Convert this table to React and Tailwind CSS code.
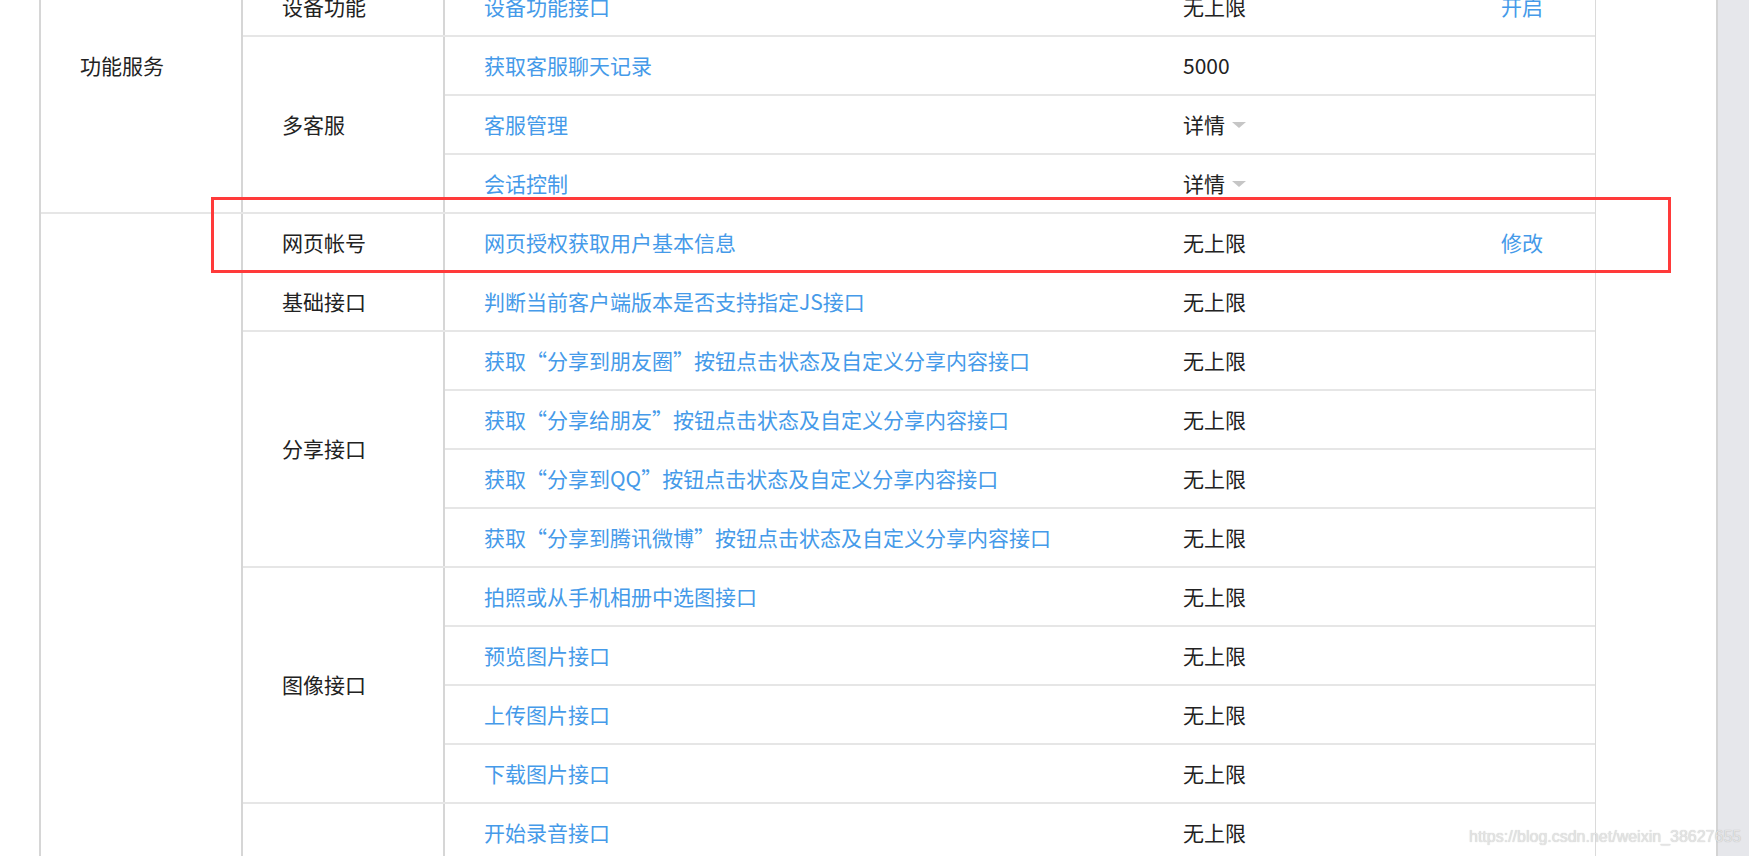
import React from "react";

const groups = [
  {
    name: "功能服务",
    subs: [
      { name: "卡券功能", rows: [{ api: "卡券接口", quota: "无上限" }] },
      { name: "设备功能", rows: [{ api: "设备功能接口", quota: "无上限", action: "开启" }] },
      {
        name: "多客服",
        rows: [
          { api: "获取客服聊天记录", quota: "5000" },
          { api: "客服管理", quota: "详情", dropdown: true },
          { api: "会话控制", quota: "详情", dropdown: true },
        ],
      },
    ],
  },
  {
    name: "网页服务",
    subs: [
      { name: "网页帐号", rows: [{ api: "网页授权获取用户基本信息", quota: "无上限", action: "修改" }] },
      { name: "基础接口", rows: [{ api: "判断当前客户端版本是否支持指定JS接口", quota: "无上限" }] },
      {
        name: "分享接口",
        rows: [
          { api: "获取“分享到朋友圈”按钮点击状态及自定义分享内容接口", quota: "无上限" },
          { api: "获取“分享给朋友”按钮点击状态及自定义分享内容接口", quota: "无上限" },
          { api: "获取“分享到QQ”按钮点击状态及自定义分享内容接口", quota: "无上限" },
          { api: "获取“分享到腾讯微博”按钮点击状态及自定义分享内容接口", quota: "无上限" },
        ],
      },
      {
        name: "图像接口",
        rows: [
          { api: "拍照或从手机相册中选图接口", quota: "无上限" },
          { api: "预览图片接口", quota: "无上限" },
          { api: "上传图片接口", quota: "无上限" },
          { api: "下载图片接口", quota: "无上限" },
        ],
      },
      {
        name: "音频接口",
        rows: [
          { api: "开始录音接口", quota: "无上限" },
          { api: "停止录音接口", quota: "无上限" },
          { api: "监听录音自动停止接口", quota: "无上限" },
          { api: "播放语音接口", quota: "无上限" },
          { api: "暂停播放接口", quota: "无上限" },
          { api: "停止播放接口", quota: "无上限" },
          { api: "监听语音播放完毕接口", quota: "无上限" },
          { api: "上传语音接口", quota: "无上限" },
          { api: "下载语音接口", quota: "无上限" },
        ],
      },
      { name: "智能接口", rows: [{ api: "识别音频并返回识别结果接口", quota: "无上限" }] },
      { name: "设备信息", rows: [{ api: "获取网络状态接口", quota: "无上限" }] },
      {
        name: "地理位置",
        rows: [
          { api: "使用微信内置地图查看位置接口", quota: "无上限" },
          { api: "获取地理位置接口", quota: "无上限" },
        ],
      },
      {
        name: "界面操作",
        rows: [
          { api: "隐藏右上角菜单接口", quota: "无上限" },
          { api: "显示右上角菜单接口", quota: "无上限" },
          { api: "关闭当前网页窗口接口", quota: "无上限" },
          { api: "批量隐藏功能按钮接口", quota: "无上限" },
          { api: "批量显示功能按钮接口", quota: "无上限" },
          { api: "隐藏所有非基础按钮接口", quota: "无上限" },
          { api: "显示所有功能按钮接口", quota: "无上限" },
        ],
      },
    ],
  },
];

const Row = ({ row, last }) => (
  <div
    className={`flex h-[57px] items-center ${
      last ? "" : "box-content border-b-2 border-[#e6e6e6]"
    }`}
  >
    <div className="w-[699px] pb-[2px] pl-[39px] text-[#459ae9]">{row.api}</div>
    <div className="flex w-[318px] items-center pb-[2px] pl-[39px] text-[#222]">
      {row.quota}
      {row.dropdown && (
        <span className="ml-[7px] mt-[3px] h-0 w-0 border-x-[7px] border-t-[6px] border-x-transparent border-t-[#c6c6c6]" />
      )}
    </div>
    <div className="flex-1 pb-[2px] pl-[39px] text-[#459ae9]">{row.action}</div>
  </div>
);

const SubGroup = ({ sub, last }) => (
  <div className={`flex ${last ? "" : "border-b-2 border-[#e6e6e6]"}`}>
    <div className="flex w-[202px] shrink-0 items-center border-r-2 border-[#d6d6d6] pb-[2px] pl-[39px] text-[#222]">
      {sub.name}
    </div>
    <div className="flex flex-1 flex-col">
      {sub.rows.map((row, i) => (
        <Row key={row.api} row={row} last={i === sub.rows.length - 1} />
      ))}
    </div>
  </div>
);

const App = () => {
  return (
    <div className="relative flex h-screen overflow-hidden bg-white font-['Noto_Sans_CJK_SC','Noto_Sans',sans-serif] text-[21px] leading-[30px]">
      <div className="relative flex-1 overflow-hidden">
        <div className="-mt-[81px] ml-[39px] w-[1557px] border-l-2 border-r border-l-[#d6d6d6] border-r-[#dadada]">
          {groups.map((group) => (
            <div key={group.name} className="flex border-b-2 border-[#e6e6e6]">
              <div className="flex w-[202px] shrink-0 items-center border-r-2 border-[#d6d6d6] pb-[2px] pl-[39px] text-[#222]">
                {group.name}
              </div>
              <div className="flex flex-1 flex-col">
                {group.subs.map((sub, i) => (
                  <SubGroup key={sub.name} sub={sub} last={i === group.subs.length - 1} />
                ))}
              </div>
            </div>
          ))}
        </div>

        <div className="pointer-events-none absolute left-[211px] top-[197px] h-[76px] w-[1460px] border-[3px] border-[#ff3a3a]" />
      </div>

      <div className="w-[33px] shrink-0 border-l-2 border-[#d4d4d4] bg-[#e6e7eb]" />

      <div className="pointer-events-none absolute left-[1469px] top-[826px] font-['Liberation_Sans',sans-serif] text-[16px] leading-[22px] text-[#e4e4e4] [text-shadow:0_0_1px_rgba(0,0,0,0.25)]">
        https://blog.csdn.net/weixin_38627655
      </div>
    </div>
  );
};

export default App;
